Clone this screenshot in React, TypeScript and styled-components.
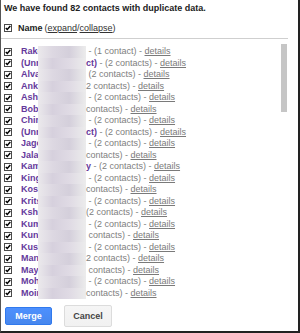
import React from 'react'
import styled, { createGlobalStyle } from 'styled-components'

const GlobalStyle = createGlobalStyle`
  html, body {
    margin: 0;
    padding: 0;
    background: #fff;
  }
  body {
    font-family: 'Liberation Sans', Arial, Helvetica, sans-serif;
  }
`

const Frame = styled.div`
  width: 300px;
  height: 333px;
  box-sizing: border-box;
  border-left: 1px solid #555;
  border-right: 2px solid #222;
  border-bottom: 2px solid #222;
  display: flex;
  flex-direction: column;
  overflow: hidden;
`
const Title = styled.h1`
  margin: 0;
  padding: 3px 0 0 3px;
  font-size: 9px;
  line-height: 11px;
  font-weight: bold;
  color: #222;
`
const Header = styled.div`
  display: flex;
  align-items: center;
  gap: 6px;
  height: 12px;
  margin-top: 8px;
  padding-left: 3px;
  font-size: 9px;
`
const HeaderLabel = styled.span`
  font-weight: bold;
  color: #222;
`
const HeaderLinks = styled.span`
  color: #333;
  margin-left: -4px;
  a {
    color: #333;
    text-decoration: underline;
  }
`
const Rule = styled.div`
  width: 287px;
  height: 1px;
  margin-top: 4px;
  background: #cfcfcf;
`
const ListWrap = styled.div`
  position: relative;
  width: 287px;
  height: 256px;
  margin-top: 5px;
`
const List = styled.div`
  height: 100%;
  padding-top: 2px;
  box-sizing: border-box;
  overflow: hidden;
`
const Thumb = styled.div`
  position: absolute;
  top: 0;
  right: 1px;
  width: 6px;
  height: 68px;
  background: #c6c6c6;
`
const Row = styled.div`
  display: flex;
  align-items: center;
  height: 11.5px;
  padding-left: 3px;
  font-size: 9px;
  line-height: 11.5px;
  white-space: pre;
`
const NameHead = styled.span`
  width: 17px;
  margin-left: 9px;
  overflow: hidden;
  font-weight: bold;
  color: #65399c;
`
const Blur = styled.span<{ shade: number }>`
  width: 48px;
  height: 100%;
  flex-shrink: 0;
  background: linear-gradient(
    to right,
    #ebe9ec 0%,
    ${({ shade }) => (shade ? '#d6d0dd' : '#ddd8e2')} 30%,
    ${({ shade }) => (shade ? '#dfdae4' : '#d4cfdb')} 65%,
    #ececec 100%
  );
`
const NameTail = styled.span`
  font-weight: bold;
  color: #65399c;
`
const Meta = styled.span`
  color: #808080;
`
const Details = styled.a`
  color: #7a7a7a;
  text-decoration: underline;
`
const Footer = styled.div`
  display: flex;
  align-items: center;
  gap: 12px;
  padding: 5px 0 0 4px;
`
const Button = styled.button<{ primary?: boolean }>`
  box-sizing: border-box;
  font-family: 'Liberation Sans', Arial, Helvetica, sans-serif;
  font-size: 9px;
  font-weight: bold;
  padding: 0;
  border-radius: 2px;
  width: ${({ primary }) => (primary ? '47px' : '48px')};
  height: ${({ primary }) => (primary ? '18px' : '22px')};
  color: ${({ primary }) => (primary ? '#fff' : '#444')};
  background: ${({ primary }) =>
    primary
      ? 'linear-gradient(#4d90fe, #4787ed)'
      : 'linear-gradient(#f5f5f5, #f1f1f1)'};
  border: 1px solid ${({ primary }) => (primary ? '#3079ed' : '#dcdcdc')};
`

const CheckIcon = () => (
  <svg width="8" height="8" viewBox="0 0 8 8" style={{ flexShrink: 0 }}>
    <rect x="0.5" y="0.5" width="7" height="7" fill="#fff" stroke="#4a4a4a" />
    <path
      d="M1.8 3.9 L3.3 5.5 L6.3 2"
      fill="none"
      stroke="#000"
      strokeWidth="1.5"
    />
  </svg>
)

// head, rest of the name after the blur, grey part
const contacts: [string, string, string][] = [
  ['Rake', '', ' - (1 contact) - '],
  ['(Unn', 'ct)', ' - (2 contacts) - '],
  ['Alva', '', ' (2 contacts) - '],
  ['Anki', '', '2 contacts) - '],
  ['Ashi', '', ' - (2 contacts) - '],
  ['Bobi', '', 'contacts) - '],
  ['Chin', '', ' - (2 contacts) - '],
  ['(Unn', 'ct)', ' - (2 contacts) - '],
  ['Jago', '', ' - (2 contacts) - '],
  ['Jalar', '', 'contacts) - '],
  ['Kam', 'y', ' - (2 contacts) - '],
  ['King', '', ' - (2 contacts) - '],
  ['Kosl', '', 'contacts) - '],
  ['Krits', '', ' - (2 contacts) - '],
  ['Kshi', '', '(2 contacts) - '],
  ['Kum', '', ' - (2 contacts) - '],
  ['Kuna', '', ' contacts) - '],
  ['Kusl', '', ' - (2 contacts) - '],
  ['Man', '', '2 contacts) - '],
  ['May', '', ' contacts) - '],
  ['Moh', '', ' - (2 contacts) - '],
  ['Moir', '', 'contacts) - '],
]

const App: React.FC = () => (
  <>
    <GlobalStyle />
    <Frame>
      <Title>We have found 82 contacts with duplicate data.</Title>
      <Header>
        <CheckIcon />
        <HeaderLabel>Name</HeaderLabel>
        <HeaderLinks>
          (<a>expand</a>/<a>collapse</a>)
        </HeaderLinks>
      </Header>
      <Rule />
      <ListWrap>
        <List>
          {contacts.map(([head, tail, meta], i) => (
            <Row key={i}>
              <CheckIcon />
              <NameHead>{head}</NameHead>
              <Blur shade={i % 2} />
              {tail && <NameTail>{tail}</NameTail>}
              <Meta>{meta}</Meta>
              <Details>details</Details>
            </Row>
          ))}
        </List>
        <Thumb />
      </ListWrap>
      <Footer>
        <Button primary>Merge</Button>
        <Button>Cancel</Button>
      </Footer>
    </Frame>
  </>
)

export default App
